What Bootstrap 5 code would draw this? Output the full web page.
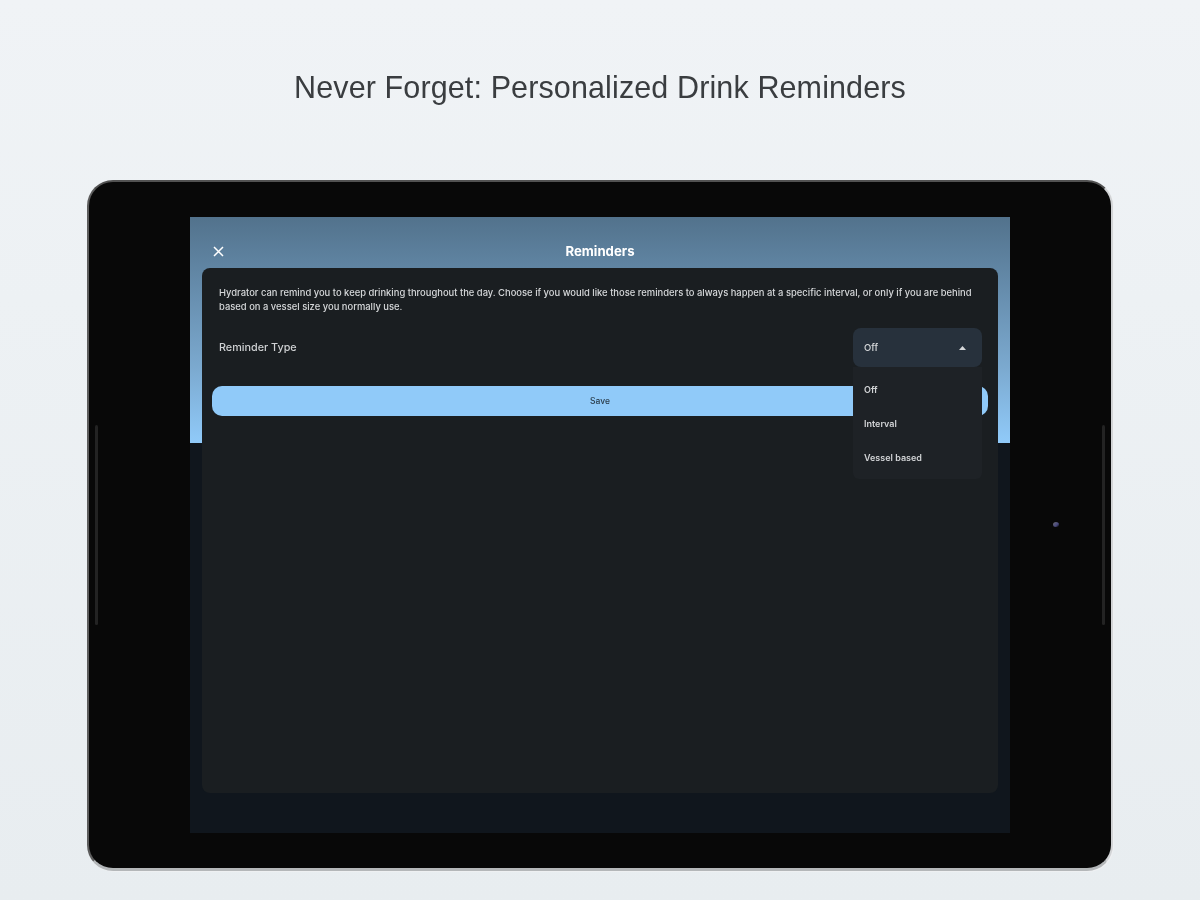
<!DOCTYPE html>
<html lang="en">
<head>
<meta charset="utf-8">
<title>Never Forget</title>
<link href="https://cdn.jsdelivr.net/npm/bootstrap@5.3.0/dist/css/bootstrap.min.css" rel="stylesheet">
<style>
html,body{height:900px;overflow:hidden}
body{background:linear-gradient(180deg,#f0f3f6 0,#edf1f4 300px,#e8edf0 900px);font-family:"Inter","Liberation Sans",sans-serif}
.page-title{height:180px;padding-top:69px;margin:0;text-align:center;font:400 30.5px/36px "Liberation Sans",sans-serif;color:#3a3d40;letter-spacing:.12px;filter:blur(.35px)}
.tablet{position:relative;width:1026px;height:691px;margin:0 auto;padding:35px 101px;background:#080808;border-style:solid;border-width:2px 2px 3px 2px;border-color:#525252 #d2d4d6 #b4b7b9 #5c5c5c;border-radius:26px;box-shadow:1px 1px 0 #eef0f2}
.side-btn{position:absolute;top:243px;width:3px;height:200px;background:#232323;border-radius:2px}
.side-l{left:6px}.side-r{right:6px}
.cam{position:absolute;left:964px;top:340px;width:6px;height:5px;border-radius:50%;background:linear-gradient(135deg,#6a6a70 0,#4a4a80 60%,#080808 100%)}
.screen{height:616px;background:#10161d linear-gradient(180deg,#52728c 0,#7ba9cf 150px,#90caf9 226px) no-repeat;background-size:100% 226px}
.app-head{height:51px;padding:21px 12px 0 22px;color:#fff}
.head-title{font-size:13.2px;font-weight:700;line-height:26px;filter:blur(.3px)}
.x-icon{width:13px;height:13px;margin-top:7px;display:block}
.x-spacer{width:23px}
.sheet{height:525px;margin:0 12px;background:#1a1e21;border-radius:8px;padding:18px 17px 0;color:#d6d8da}
.intro{font-size:9.42px;line-height:14px;margin:0 0 14px;font-weight:500;filter:blur(.3px)}
.type-label{font-size:10.8px;font-weight:500;color:#cfd1d3;filter:blur(.3px);margin-top:1px}
.type-row{height:39px}
.select-wrap{position:relative;width:129px;margin-right:-1px}
.select-box{height:39px;background:#27313c;border-radius:8px;padding:1px 16px 0 11px;font-size:9.5px;font-weight:500}
.select-menu{position:absolute;z-index:2;top:39px;left:0;width:129px;height:112px;padding:6px 0;background:#1e2226;border-radius:0 0 6px 6px}
.select-item{height:34px;line-height:34px;padding-left:11px;font-size:9px;font-weight:600;color:#d2d4d6;filter:blur(.3px)}
.select-val{filter:blur(.3px)}
.save-btn{display:block;width:776px;height:30px;margin:19px 0 0 -7px;padding:0;border:0;border-radius:10px;background:#90caf9;color:#2a3c4a;font-size:8.5px;font-weight:500;line-height:29px;text-align:center}
.save-txt{filter:blur(.3px);display:inline-block}
</style>
</head>
<body>
<h1 class="page-title">Never Forget: Personalized Drink Reminders</h1>
<div class="tablet">
  <span class="side-btn side-l"></span><span class="side-btn side-r"></span><span class="cam"></span>
  <div class="screen">
    <div class="app-head d-flex">
      <svg class="x-icon" viewBox="0 0 13 13" fill="none" stroke="#fff" stroke-width="1.5"><path d="M2 2l9 9M11 2l-9 9"/></svg>
      <div class="head-title flex-grow-1 text-center">Reminders</div>
      <div class="x-spacer"></div>
    </div>
    <div class="sheet">
      <p class="intro">Hydrator can remind you to keep drinking throughout the day. Choose if you would like those reminders to always happen at a specific interval, or only if you are behind based on a vessel size you normally use.</p>
      <div class="type-row d-flex justify-content-between align-items-center">
        <span class="type-label">Reminder Type</span>
        <div class="select-wrap">
          <div class="select-box d-flex justify-content-between align-items-center">
            <span class="select-val">Off</span>
            <svg width="7" height="4" viewBox="0 0 7 4"><path d="M3.5 0L7 4H0z" fill="#d6d8da"/></svg>
          </div>
          <div class="select-menu">
            <div class="select-item">Off</div>
            <div class="select-item">Interval</div>
            <div class="select-item">Vessel based</div>
          </div>
        </div>
      </div>
      <button class="save-btn" type="button"><span class="save-txt">Save</span></button>
    </div>
  </div>
</div>
<script src="https://cdn.jsdelivr.net/npm/bootstrap@5.3.0/dist/js/bootstrap.bundle.min.js"></script>
</body>
</html>
